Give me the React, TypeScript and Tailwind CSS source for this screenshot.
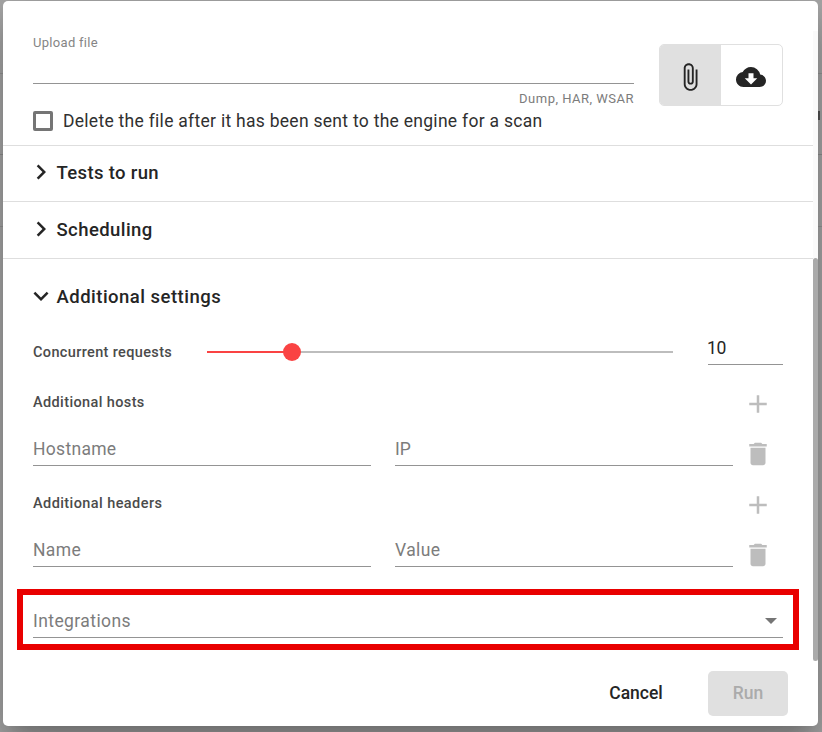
import type { ReactNode } from "react";
import { MdAdd, MdAttachFile, MdChevronRight, MdCloudDownload, MdDelete, MdExpandMore } from "react-icons/md";

function Section({ title, tracking, open, className }: { title: string; tracking: string; open?: boolean; className: string }) {
  const Icon = open ? MdExpandMore : MdChevronRight;
  return (
    <div className={`flex items-center pl-[23px] text-[#252525] ${className}`}>
      <Icon size={30} className="mb-[2px] shrink-0" />
      <h2 className={`ml-[0.5px] whitespace-nowrap text-[18.5px] leading-6 font-medium ${tracking}`}>{title}</h2>
    </div>
  );
}

function Field({ label, tracking }: { label: string; tracking: string }) {
  return (
    <div className="h-[32px] w-[338px] border-b border-[#949494] text-[17.5px] leading-[31px] text-[#7c7c7c]">
      <span className={`whitespace-nowrap ${tracking}`}>{label}</span>
    </div>
  );
}

function PairGroup({ title, tracking, children }: { title: string; tracking: string; children: ReactNode }) {
  return (
    <div className="h-[101px] pl-[30px]">
      <div className="flex h-[52px] items-start">
        <h3 className={`w-[710px] pt-[12px] text-[14.5px] leading-5 font-medium text-[#4b4b4b] ${tracking}`}>{title}</h3>
        <MdAdd size={30} className="mt-[8px] -ml-[0.5px] text-[#bdbdbd]" />
      </div>
      <div className="flex">
        <div className="flex gap-6 pt-px">{children}</div>
        <MdDelete size={30} className="mt-[5.5px] ml-[9.5px] text-[#bdbdbd]" />
      </div>
    </div>
  );
}

export default function App() {
  return (
    <div className="relative h-[732px] w-[822px] overflow-hidden bg-[#a8a8a8] font-['Roboto','Liberation_Sans',sans-serif]">
      <div className="absolute inset-x-0 top-0">
        <div className="h-[74px] border-b border-black/10" />
        <div className="flex h-[81px] justify-end border-b border-black/15 pt-[37px]">
          <div className="mr-[2px] h-[9px] w-[2px] bg-black/50" />
        </div>
        <div className="h-[72px] border-b border-black/10" />
      </div>

      <div className="relative mt-px ml-[3px] flex h-[725px] w-[815px] flex-col rounded-[5px] bg-white shadow-[0_14px_19px_-9px_rgba(0,0,0,0.2),0_30px_48px_4px_rgba(0,0,0,0.14),0_11px_58px_10px_rgba(0,0,0,0.12)]">
        <div className="flex h-[660px]">
          <div className="w-[810px]">
            <div className="flex h-[145px] justify-between border-b border-[#dedede] pr-[30px] pl-[30px]">
              <div className="w-[601px] pt-[31px]">
                <div className="h-[52px] border-b border-[#949494] text-[13px] leading-[21px] tracking-[0.3px] text-[#858585]">Upload file</div>
                <div className="mt-[5px] text-right text-[13px] leading-5 text-[#7c7c7c]">
                  <span className="tracking-[0.49px]">Dump, HAR, WSAR</span>
                </div>
                <label className="flex h-6 items-center text-[17.5px] text-[#303030]">
                  <span className="mr-[10px] size-5 shrink-0 rounded-[2px] border-[3px] border-[#757575]" />
                  <span className="whitespace-nowrap tracking-[0.28px]">Delete the file after it has been sent to the engine for a scan</span>
                </label>
              </div>
              <div className="mt-[43px] flex h-[62px] w-[124px] overflow-hidden rounded-[5px] border border-[#e0e0e0] text-[#252525]">
                <button className="flex w-[61px] items-center justify-center bg-[#e0e0e0] pt-1 pr-[2px]"><MdAttachFile size={30} /></button>
                <button className="flex flex-1 items-center justify-center pt-1 pr-[2px]"><MdCloudDownload size={30} /></button>
              </div>
            </div>
            <Section title="Tests to run" tracking="tracking-[0.35px]" className="h-[56px] border-b border-[#dedede] pb-px" />
            <Section title="Scheduling" tracking="tracking-[0.42px]" className="h-[57px] border-b border-[#dedede]" />
            <Section title="Additional settings" tracking="tracking-[0.48px]" open className="h-[75px]" />

            <div className="flex h-[45px] pl-[30px]">
              <span className="w-[174px] pt-[9px] text-[14.5px] leading-5 font-medium tracking-[0.36px] text-[#4b4b4b]">Concurrent requests</span>
              <div className="relative mt-[17px] h-[2px] w-[466px] bg-[#bdbdbd]">
                <div className="h-full w-[85px] bg-[#fa4343]" />
                <div className="absolute top-[-8.5px] left-[76px] size-[18px] rounded-full bg-[#fa4343]" />
              </div>
              <div className="ml-[35px] h-[31px] w-[75px] border-b border-[#949494] text-[17.5px] leading-[28px] text-[#252525]">
                <span className="-ml-px tracking-[-0.3px]">10</span>
              </div>
            </div>

            <div className="pt-[2px]">
              <PairGroup title="Additional hosts" tracking="tracking-[0.38px]">
                <Field label="Hostname" tracking="tracking-[0.3px]" />
                <Field label="IP" tracking="tracking-[0px]" />
              </PairGroup>
              <PairGroup title="Additional headers" tracking="tracking-[0.42px]">
                <Field label="Name" tracking="tracking-[0.35px]" />
                <Field label="Value" tracking="tracking-[0.4px]" />
              </PairGroup>
            </div>

            <div className="mt-[6px] ml-[14px] h-[61px] w-[782px] border-[6px] border-[#e90000] px-[10px] pt-[10px]">
              <div className="flex h-[33px] items-start justify-between border-b border-[#949494] text-[17.5px] leading-[32px] text-[#7c7c7c]">
                <span className="tracking-[0.42px]">Integrations</span>
                <span className="mt-[13px] mr-[6px] h-0 w-0 border-x-[6px] border-t-[6px] border-x-transparent border-t-[#757575]" />
              </div>
            </div>
          </div>
          <div className="mt-[30px] w-[5px] bg-[#fafafa] pt-[227px]">
            <div className="h-[403px] rounded-[3px] bg-[#aaaaaa]" />
          </div>
        </div>
        <div className="flex justify-end gap-[20px] pt-[10px] pr-[30px] text-[17.5px] font-medium">
          <button className="h-[45px] w-[104px] text-[#252525]">Cancel</button>
          <button className="h-[45px] w-[80px] rounded-[5px] bg-[#e0e0e0] text-[#ababab]">Run</button>
        </div>
      </div>
    </div>
  );
}
